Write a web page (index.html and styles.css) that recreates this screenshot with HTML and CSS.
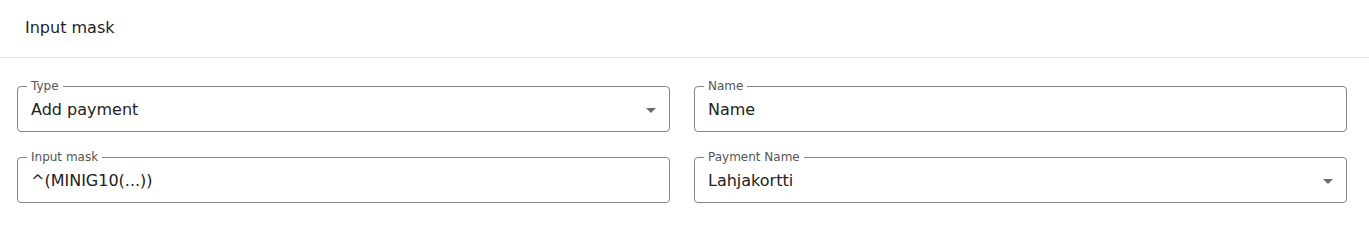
FILE: index.html
```html
<!DOCTYPE html>
<html lang="en">
<head>
<meta charset="utf-8">
<title>Input mask</title>
<link rel="stylesheet" href="styles.css">
</head>
<body>
<header class="header">
  <h1 class="title">Input mask</h1>
</header>
<main class="form">
  <fieldset class="field">
    <legend class="label">Type</legend>
    <div class="value">Add payment</div>
    <svg class="arrow" width="10" height="5" viewBox="0 0 10 5"><path d="M0 0h10L5 5z"/></svg>
  </fieldset>
  <fieldset class="field">
    <legend class="label">Name</legend>
    <div class="value">Name</div>
  </fieldset>
  <fieldset class="field">
    <legend class="label">Input mask</legend>
    <div class="value">^(MINIG10(...))</div>
  </fieldset>
  <fieldset class="field">
    <legend class="label">Payment Name</legend>
    <div class="value">Lahjakortti</div>
    <svg class="arrow" width="10" height="5" viewBox="0 0 10 5"><path d="M0 0h10L5 5z"/></svg>
  </fieldset>
</main>
</body>
</html>
```
FILE: styles.css
```css
html, body {
  margin: 0;
  background: #fff;
}
body {
  font-family: "DejaVu Sans", "Inter", sans-serif;
  color: #212121;
}
.header {
  height: 57px;
  border-bottom: 1px solid #e4e4e4;
  display: flex;
  align-items: center;
  padding: 0 25px;
}
.title {
  margin: 0;
  font-size: 16px;
  font-weight: 500;
  color: #1f1f1f;
  padding-bottom: 3px;
}
.form {
  display: grid;
  grid-template-columns: 1fr 1fr;
  column-gap: 24px;
  row-gap: 18px;
  padding: 21px 22px 0 17px;
}
.field {
  margin: 0;
  min-width: 0;
  border: 1px solid #858585;
  border-radius: 4px;
  padding: 1px 9px 5px;
  display: flex;
  align-items: center;
}
.label {
  padding: 0 4px;
  font-size: 12px;
  line-height: 14px;
  color: #555;
}
.value {
  flex: 1;
  padding: 0 4px;
  font-size: 16px;
  line-height: 32px;
  color: #222;
}
.arrow {
  fill: #6b6b6b;
  margin-right: 4px;
}
```
